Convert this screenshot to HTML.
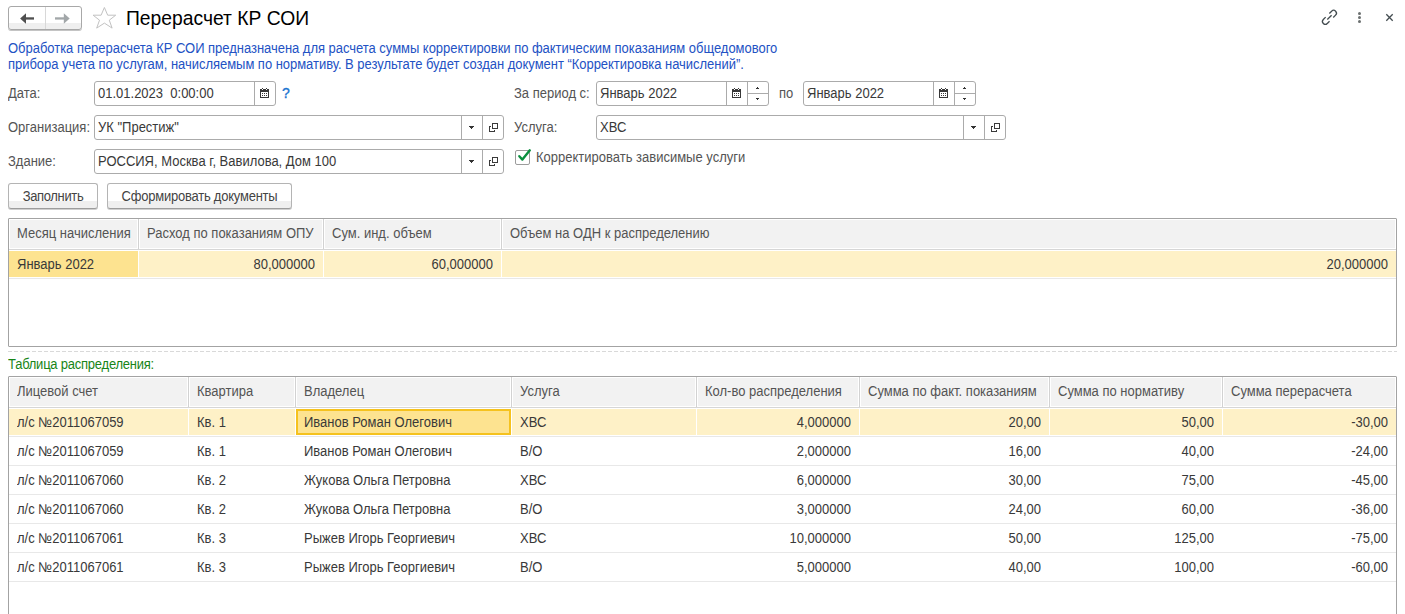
<!DOCTYPE html>
<html><head><meta charset="utf-8">
<style>
*{box-sizing:border-box}
html,body{margin:0;padding:0;background:#fff;width:1405px;height:614px;overflow:hidden;font-family:"Liberation Sans",sans-serif;font-size:13px;color:#4d4d4d}
.a{position:absolute;white-space:nowrap}
.lbl{color:#545454;font-size:13px;line-height:16px;transform:scaleY(1.1);transform-origin:0 12.5px}
.inp{position:absolute;border:1px solid #ababab;border-radius:3px;background:#fff;height:25px}
.inp .v{position:absolute;left:3px;top:4px;color:#393939;font-size:13px;line-height:16px;white-space:nowrap;transform:scaleY(1.1);transform-origin:0 12.5px}
.inp .sep{position:absolute;top:0;bottom:0;width:1px;background:#ababab}
.inp svg{position:absolute;top:0}
.btn{position:absolute;height:26px;border:1px solid #b4b4b4;border-bottom-color:#9c9c9c;border-radius:3px;background:linear-gradient(#fff 0,#fff 17px,#efefef 17px,#efefef 100%);box-shadow:0 1px 0 #cfcfcf;color:#444;font-size:13px;line-height:26px;text-align:center}
.tb{position:absolute;border:1px solid #a3a3a3;border-radius:1px;background:#fff}
.ht{line-height:30px;color:#545454;overflow:hidden;transform:scaleY(1.1);transform-origin:0 19.5px}
.ct{line-height:29px;color:#393939;transform:scaleY(1.1);transform-origin:0 19px}
.sy{display:inline-block;transform:scaleY(1.1);transform-origin:0 17.5px}
.dl{transform:scaleY(1.1);transform-origin:0 12.5px}
</style></head><body>

<!-- nav buttons -->
<div class="a" style="left:8px;top:6px;width:74px;height:24px;border:1px solid #a8a8a8;border-radius:3px;background:linear-gradient(#fff 0,#fff 16px,#efefef 16px,#efefef 100%);box-shadow:0 1px 0 #c4c4c4"></div>
<div class="a" style="left:45px;top:7px;width:1px;height:22px;background:#d8d8d8"></div>
<svg class="a" style="left:0;top:0" width="130" height="40">
  <path d="M20.1 18.45 L26 13.2 L26 23.7 Z" fill="#4f4f4f"/>
  <rect x="25" y="17.3" width="9" height="2.3" fill="#4f4f4f"/>
  <path d="M69.7 18.45 L63.8 13.2 L63.8 23.7 Z" fill="#a2a7a9"/>
  <rect x="55" y="17.3" width="9" height="2.3" fill="#a2a7a9"/>
  <path d="M104.4 7.5 L107.7 15.2 L115.7 15.2 L109.3 20.2 L112.1 28.1 L104.4 23.1 L96.7 28.1 L99.5 20.2 L93.1 15.2 L101.1 15.2 Z" fill="none" stroke="#c2c2c2" stroke-width="1" stroke-linejoin="miter"/>
</svg>
<div class="a" style="left:126px;top:6px;font-size:19.3px;line-height:26px;color:#000">Перерасчет КР СОИ</div>

<!-- top right icons -->
<svg class="a" style="left:1310px;top:0" width="95" height="40">
  <g fill="none" stroke="#434c50" stroke-width="1.3">
  <path d="M19.36 13.43 L21.62 11.17 A2.8 2.8 0 0 1 25.58 15.13 L23.25 17.46"/>
  <path d="M19.54 21.17 L17.28 23.43 A2.8 2.8 0 0 1 13.32 19.47 L15.65 17.14"/>
  <path d="M17.3 19.5 L21.6 15.2"/>
  </g>
  <circle cx="49.5" cy="13.5" r="1.5" fill="#6b7070"/>
  <circle cx="49.5" cy="17.5" r="1.5" fill="#6b7070"/>
  <circle cx="49.5" cy="21.4" r="1.5" fill="#6b7070"/>
  <path d="M76.3 14.3 L82.7 20.7 M82.7 14.3 L76.3 20.7" stroke="#434c50" stroke-width="1.3"/>
</svg>

<!-- description -->
<div class="a dl" style="left:8px;top:41px;font-size:13px;line-height:16px;color:#2352c4;letter-spacing:-0.03px">Обработка перерасчета КР СОИ предназначена для расчета суммы корректировки по фактическим показаниям общедомового</div>
<div class="a dl" style="left:8px;top:57px;font-size:13px;line-height:16px;color:#2352c4;letter-spacing:-0.03px">прибора учета по услугам, начисляемым по нормативу. В результате будет создан документ “Корректировка начислений”.</div>

<!-- row: Дата -->
<div class="a lbl" style="left:8px;top:86px">Дата:</div>
<div class="inp" style="left:94px;top:81px;width:182px">
  <div class="v">01.01.2023&nbsp; 0:00:00</div>
  <div class="sep" style="left:159px"></div>
  <svg style="left:165px;top:6px" width="9" height="10" shape-rendering="crispEdges"><g fill="#383838"><rect x="0" y="1" width="9" height="3"/><rect x="0" y="1" width="1" height="9"/><rect x="8" y="1" width="1" height="9"/><rect x="0" y="9" width="9" height="1"/><rect x="2" y="0" width="1" height="1"/><rect x="6" y="0" width="1" height="1"/><rect x="2" y="5" width="1" height="1"/><rect x="4" y="5" width="1" height="1"/><rect x="6" y="5" width="1" height="1"/><rect x="2" y="7" width="1" height="1"/><rect x="4" y="7" width="1" height="1"/><rect x="6" y="7" width="1" height="1"/></g><rect x="2" y="1" width="1" height="1" fill="#fff"/><rect x="6" y="1" width="1" height="1" fill="#fff"/></svg>
</div>
<div class="a" style="left:282px;top:85px;color:#1a74d0;font-size:14px;line-height:16px;-webkit-text-stroke:0.35px #1a74d0">?</div>

<div class="a lbl" style="left:514px;top:86px">За период с:</div>
<div class="inp" style="left:596px;top:81px;width:173px">
  <div class="v">Январь 2022</div>
  <div class="sep" style="left:129px"></div>
  <div class="sep" style="left:150px"></div>
  <div class="a" style="left:151px;top:11px;width:20px;height:1px;background:#ababab"></div>
  <svg style="left:135px;top:6px" width="9" height="10" shape-rendering="crispEdges"><g fill="#383838"><rect x="0" y="1" width="9" height="3"/><rect x="0" y="1" width="1" height="9"/><rect x="8" y="1" width="1" height="9"/><rect x="0" y="9" width="9" height="1"/><rect x="2" y="0" width="1" height="1"/><rect x="6" y="0" width="1" height="1"/><rect x="2" y="5" width="1" height="1"/><rect x="4" y="5" width="1" height="1"/><rect x="6" y="5" width="1" height="1"/><rect x="2" y="7" width="1" height="1"/><rect x="4" y="7" width="1" height="1"/><rect x="6" y="7" width="1" height="1"/></g><rect x="2" y="1" width="1" height="1" fill="#fff"/><rect x="6" y="1" width="1" height="1" fill="#fff"/></svg>
  <svg style="left:159px;top:5px" width="3" height="13" shape-rendering="crispEdges"><g fill="#333"><rect x="1" y="0" width="1" height="1"/><rect x="0" y="1" width="3" height="1"/><rect x="0" y="11" width="3" height="1"/><rect x="1" y="12" width="1" height="1"/></g></svg>
</div>
<div class="a lbl" style="left:779px;top:86px">по</div>
<div class="inp" style="left:803px;top:81px;width:173px">
  <div class="v">Январь 2022</div>
  <div class="sep" style="left:129px"></div>
  <div class="sep" style="left:150px"></div>
  <div class="a" style="left:151px;top:11px;width:20px;height:1px;background:#ababab"></div>
  <svg style="left:135px;top:6px" width="9" height="10" shape-rendering="crispEdges"><g fill="#383838"><rect x="0" y="1" width="9" height="3"/><rect x="0" y="1" width="1" height="9"/><rect x="8" y="1" width="1" height="9"/><rect x="0" y="9" width="9" height="1"/><rect x="2" y="0" width="1" height="1"/><rect x="6" y="0" width="1" height="1"/><rect x="2" y="5" width="1" height="1"/><rect x="4" y="5" width="1" height="1"/><rect x="6" y="5" width="1" height="1"/><rect x="2" y="7" width="1" height="1"/><rect x="4" y="7" width="1" height="1"/><rect x="6" y="7" width="1" height="1"/></g><rect x="2" y="1" width="1" height="1" fill="#fff"/><rect x="6" y="1" width="1" height="1" fill="#fff"/></svg>
  <svg style="left:159px;top:5px" width="3" height="13" shape-rendering="crispEdges"><g fill="#333"><rect x="1" y="0" width="1" height="1"/><rect x="0" y="1" width="3" height="1"/><rect x="0" y="11" width="3" height="1"/><rect x="1" y="12" width="1" height="1"/></g></svg>
</div>

<!-- row: Организация -->
<div class="a lbl" style="left:8px;top:120px">Организация:</div>
<div class="inp" style="left:94px;top:115px;width:410px">
  <div class="v">УК "Престиж"</div>
  <div class="sep" style="left:366px"></div>
  <div class="sep" style="left:387px"></div>
  <svg style="left:367px;top:0" width="42" height="23" shape-rendering="crispEdges"><g fill="#333"><rect x="7" y="10" width="5" height="1"/><rect x="8" y="11" width="3" height="1"/><rect x="9" y="12" width="1" height="1"/></g><g fill="#3a3a3a"><rect x="30" y="7" width="6" height="1"/><rect x="30" y="12" width="6" height="1"/><rect x="30" y="7" width="1" height="6"/><rect x="35" y="7" width="1" height="6"/><rect x="27" y="10" width="1" height="6"/><rect x="28" y="10" width="1" height="1"/><rect x="27" y="15" width="6" height="1"/><rect x="32" y="14" width="1" height="1"/></g></svg>
</div>
<div class="a lbl" style="left:514px;top:120px">Услуга:</div>
<div class="inp" style="left:596px;top:115px;width:410px">
  <div class="v">ХВС</div>
  <div class="sep" style="left:366px"></div>
  <div class="sep" style="left:387px"></div>
  <svg style="left:367px;top:0" width="42" height="23" shape-rendering="crispEdges"><g fill="#333"><rect x="7" y="10" width="5" height="1"/><rect x="8" y="11" width="3" height="1"/><rect x="9" y="12" width="1" height="1"/></g><g fill="#3a3a3a"><rect x="30" y="7" width="6" height="1"/><rect x="30" y="12" width="6" height="1"/><rect x="30" y="7" width="1" height="6"/><rect x="35" y="7" width="1" height="6"/><rect x="27" y="10" width="1" height="6"/><rect x="28" y="10" width="1" height="1"/><rect x="27" y="15" width="6" height="1"/><rect x="32" y="14" width="1" height="1"/></g></svg>
</div>

<!-- row: Здание -->
<div class="a lbl" style="left:8px;top:154px">Здание:</div>
<div class="inp" style="left:94px;top:149px;width:410px">
  <div class="v">РОССИЯ, Москва г, Вавилова, Дом 100</div>
  <div class="sep" style="left:366px"></div>
  <div class="sep" style="left:387px"></div>
  <svg style="left:367px;top:0" width="42" height="23" shape-rendering="crispEdges"><g fill="#333"><rect x="7" y="10" width="5" height="1"/><rect x="8" y="11" width="3" height="1"/><rect x="9" y="12" width="1" height="1"/></g><g fill="#3a3a3a"><rect x="30" y="7" width="6" height="1"/><rect x="30" y="12" width="6" height="1"/><rect x="30" y="7" width="1" height="6"/><rect x="35" y="7" width="1" height="6"/><rect x="27" y="10" width="1" height="6"/><rect x="28" y="10" width="1" height="1"/><rect x="27" y="15" width="6" height="1"/><rect x="32" y="14" width="1" height="1"/></g></svg>
</div>
<div class="a" style="left:515px;top:150px;width:15px;height:15px;border:1px solid #9c9c9c;border-radius:2px;background:#fff"></div>
<svg class="a" style="left:510px;top:144px" width="25" height="22"><path d="M9.3 12.2 L12.4 15.6 L19.8 6.3" fill="none" stroke="#0a8f3e" stroke-width="2.35" stroke-linecap="round" stroke-linejoin="round"/></svg>
<div class="a lbl" style="left:536px;top:150px">Корректировать зависимые услуги</div>

<!-- buttons -->
<div class="btn" style="left:8px;top:183px;width:90px;"><span class="sy" style="letter-spacing:-0.35px">Заполнить</span></div>
<div class="btn" style="left:107px;top:183px;width:185px;"><span class="sy" style="letter-spacing:-0.23px">Сформировать документы</span></div>

<!-- table1 -->
<div class="tb" style="left:8px;top:218px;width:1389px;height:129px"></div>
<div class="a" style="left:9px;top:219px;width:1387px;height:30px;background:#f2f2f2;box-shadow:inset 0 0 0 1px #fff"></div>
<div class="a" style="left:9px;top:249px;width:1387px;height:1px;background:#d6d6d6"></div>
<div class="a" style="left:137px;top:219px;width:3px;height:30px;background:#fff"></div>
<div class="a" style="left:138px;top:219px;width:1px;height:30px;background:#d2d2d2"></div>
<div class="a" style="left:322px;top:219px;width:3px;height:30px;background:#fff"></div>
<div class="a" style="left:323px;top:219px;width:1px;height:30px;background:#d2d2d2"></div>
<div class="a" style="left:500px;top:219px;width:3px;height:30px;background:#fff"></div>
<div class="a" style="left:501px;top:219px;width:1px;height:30px;background:#d2d2d2"></div>
<div class="a ht" style="left:17px;top:219px;width:118px">Месяц начисления</div>
<div class="a ht" style="left:147px;top:219px;width:173px">Расход по показаниям ОПУ</div>
<div class="a ht" style="left:332px;top:219px;width:166px">Сум. инд. объем</div>
<div class="a ht" style="left:510px;top:219px;width:883px">Объем на ОДН к распределению</div>
<div class="a" style="left:9px;top:251px;width:1387px;height:26px;background:#fef1c7"></div>
<div class="a" style="left:138px;top:251px;width:1px;height:26px;background:#fff"></div>
<div class="a" style="left:323px;top:251px;width:1px;height:26px;background:#fff"></div>
<div class="a" style="left:501px;top:251px;width:1px;height:26px;background:#fff"></div>
<div class="a" style="left:9px;top:251px;width:129px;height:26px;background:#fde390"></div>
<div class="a" style="left:9px;top:278px;width:1387px;height:1px;background:#e8e8e8"></div>
<div class="a ct" style="left:17px;top:250px">Январь 2022</div>
<div class="a ct" style="left:138px;top:250;width:177px;text-align:right;top:250px">80,000000</div>
<div class="a ct" style="left:323px;top:250;width:170px;text-align:right;top:250px">60,000000</div>
<div class="a ct" style="left:501px;top:250;width:887px;text-align:right;top:250px">20,000000</div>
<!-- separator -->
<div class="a" style="left:8px;top:351px;width:1389px;height:1px;background:repeating-linear-gradient(90deg,#d9d9d9 0,#d9d9d9 4px,transparent 4px,transparent 6px)"></div>
<div class="a" style="left:8px;top:357px;font-size:13px;line-height:16px;color:#178517;letter-spacing:-0.23px;transform:scaleY(1.1);transform-origin:0 12.5px">Таблица распределения:</div>

<!-- table2 -->
<div class="tb" style="left:8px;top:376px;width:1389px;height:260px"></div>
<div class="a" style="left:9px;top:377px;width:1387px;height:30px;background:#f2f2f2;box-shadow:inset 0 0 0 1px #fff"></div>
<div class="a" style="left:9px;top:407px;width:1387px;height:1px;background:#d6d6d6"></div>
<div class="a" style="left:187px;top:377px;width:3px;height:30px;background:#fff"></div>
<div class="a" style="left:188px;top:377px;width:1px;height:30px;background:#d2d2d2"></div>
<div class="a" style="left:294px;top:377px;width:3px;height:30px;background:#fff"></div>
<div class="a" style="left:295px;top:377px;width:1px;height:30px;background:#d2d2d2"></div>
<div class="a" style="left:510px;top:377px;width:3px;height:30px;background:#fff"></div>
<div class="a" style="left:511px;top:377px;width:1px;height:30px;background:#d2d2d2"></div>
<div class="a" style="left:695px;top:377px;width:3px;height:30px;background:#fff"></div>
<div class="a" style="left:696px;top:377px;width:1px;height:30px;background:#d2d2d2"></div>
<div class="a" style="left:858px;top:377px;width:3px;height:30px;background:#fff"></div>
<div class="a" style="left:859px;top:377px;width:1px;height:30px;background:#d2d2d2"></div>
<div class="a" style="left:1048px;top:377px;width:3px;height:30px;background:#fff"></div>
<div class="a" style="left:1049px;top:377px;width:1px;height:30px;background:#d2d2d2"></div>
<div class="a" style="left:1221px;top:377px;width:3px;height:30px;background:#fff"></div>
<div class="a" style="left:1222px;top:377px;width:1px;height:30px;background:#d2d2d2"></div>
<div class="a ht" style="left:17px;top:377px;width:168px">Лицевой счет</div>
<div class="a ht" style="left:197px;top:377px;width:95px">Квартира</div>
<div class="a ht" style="left:304px;top:377px;width:204px">Владелец</div>
<div class="a ht" style="left:520px;top:377px;width:173px">Услуга</div>
<div class="a ht" style="left:705px;top:377px;width:151px">Кол-во распределения</div>
<div class="a ht" style="left:868px;top:377px;width:178px">Сумма по факт. показаниям</div>
<div class="a ht" style="left:1058px;top:377px;width:161px">Сумма по нормативу</div>
<div class="a ht" style="left:1231px;top:377px;width:162px">Сумма перерасчета</div>
<div class="a" style="left:9px;top:409px;width:1387px;height:26px;background:#fef1c7"></div>
<div class="a" style="left:188px;top:409px;width:1px;height:26px;background:#fff"></div>
<div class="a" style="left:295px;top:409px;width:1px;height:26px;background:#fff"></div>
<div class="a" style="left:511px;top:409px;width:1px;height:26px;background:#fff"></div>
<div class="a" style="left:696px;top:409px;width:1px;height:26px;background:#fff"></div>
<div class="a" style="left:859px;top:409px;width:1px;height:26px;background:#fff"></div>
<div class="a" style="left:1049px;top:409px;width:1px;height:26px;background:#fff"></div>
<div class="a" style="left:1222px;top:409px;width:1px;height:26px;background:#fff"></div>
<div class="a" style="left:296px;top:409px;width:215px;height:26px;background:#fde390;border:2px solid #f5c21e;box-sizing:border-box"></div>
<div class="a" style="left:9px;top:436px;width:1387px;height:1px;background:#e8e8e8"></div>
<div class="a ct" style="left:17px;top:408px">л/с №2011067059</div>
<div class="a ct" style="left:197px;top:408px">Кв. 1</div>
<div class="a ct" style="left:304px;top:408px">Иванов Роман Олегович</div>
<div class="a ct" style="left:520px;top:408px">ХВС</div>
<div class="a ct" style="left:696px;top:408;width:155px;text-align:right;top:408px">4,000000</div>
<div class="a ct" style="left:859px;top:408;width:182px;text-align:right;top:408px">20,00</div>
<div class="a ct" style="left:1049px;top:408;width:165px;text-align:right;top:408px">50,00</div>
<div class="a ct" style="left:1222px;top:408;width:166px;text-align:right;top:408px">-30,00</div>
<div class="a" style="left:9px;top:465px;width:1387px;height:1px;background:#e8e8e8"></div>
<div class="a ct" style="left:17px;top:437px">л/с №2011067059</div>
<div class="a ct" style="left:197px;top:437px">Кв. 1</div>
<div class="a ct" style="left:304px;top:437px">Иванов Роман Олегович</div>
<div class="a ct" style="left:520px;top:437px">В/О</div>
<div class="a ct" style="left:696px;top:437;width:155px;text-align:right;top:437px">2,000000</div>
<div class="a ct" style="left:859px;top:437;width:182px;text-align:right;top:437px">16,00</div>
<div class="a ct" style="left:1049px;top:437;width:165px;text-align:right;top:437px">40,00</div>
<div class="a ct" style="left:1222px;top:437;width:166px;text-align:right;top:437px">-24,00</div>
<div class="a" style="left:9px;top:494px;width:1387px;height:1px;background:#e8e8e8"></div>
<div class="a ct" style="left:17px;top:466px">л/с №2011067060</div>
<div class="a ct" style="left:197px;top:466px">Кв. 2</div>
<div class="a ct" style="left:304px;top:466px">Жукова Ольга Петровна</div>
<div class="a ct" style="left:520px;top:466px">ХВС</div>
<div class="a ct" style="left:696px;top:466;width:155px;text-align:right;top:466px">6,000000</div>
<div class="a ct" style="left:859px;top:466;width:182px;text-align:right;top:466px">30,00</div>
<div class="a ct" style="left:1049px;top:466;width:165px;text-align:right;top:466px">75,00</div>
<div class="a ct" style="left:1222px;top:466;width:166px;text-align:right;top:466px">-45,00</div>
<div class="a" style="left:9px;top:523px;width:1387px;height:1px;background:#e8e8e8"></div>
<div class="a ct" style="left:17px;top:495px">л/с №2011067060</div>
<div class="a ct" style="left:197px;top:495px">Кв. 2</div>
<div class="a ct" style="left:304px;top:495px">Жукова Ольга Петровна</div>
<div class="a ct" style="left:520px;top:495px">В/О</div>
<div class="a ct" style="left:696px;top:495;width:155px;text-align:right;top:495px">3,000000</div>
<div class="a ct" style="left:859px;top:495;width:182px;text-align:right;top:495px">24,00</div>
<div class="a ct" style="left:1049px;top:495;width:165px;text-align:right;top:495px">60,00</div>
<div class="a ct" style="left:1222px;top:495;width:166px;text-align:right;top:495px">-36,00</div>
<div class="a" style="left:9px;top:552px;width:1387px;height:1px;background:#e8e8e8"></div>
<div class="a ct" style="left:17px;top:524px">л/с №2011067061</div>
<div class="a ct" style="left:197px;top:524px">Кв. 3</div>
<div class="a ct" style="left:304px;top:524px">Рыжев Игорь Георгиевич</div>
<div class="a ct" style="left:520px;top:524px">ХВС</div>
<div class="a ct" style="left:696px;top:524;width:155px;text-align:right;top:524px">10,000000</div>
<div class="a ct" style="left:859px;top:524;width:182px;text-align:right;top:524px">50,00</div>
<div class="a ct" style="left:1049px;top:524;width:165px;text-align:right;top:524px">125,00</div>
<div class="a ct" style="left:1222px;top:524;width:166px;text-align:right;top:524px">-75,00</div>
<div class="a" style="left:9px;top:581px;width:1387px;height:1px;background:#e8e8e8"></div>
<div class="a ct" style="left:17px;top:553px">л/с №2011067061</div>
<div class="a ct" style="left:197px;top:553px">Кв. 3</div>
<div class="a ct" style="left:304px;top:553px">Рыжев Игорь Георгиевич</div>
<div class="a ct" style="left:520px;top:553px">В/О</div>
<div class="a ct" style="left:696px;top:553;width:155px;text-align:right;top:553px">5,000000</div>
<div class="a ct" style="left:859px;top:553;width:182px;text-align:right;top:553px">40,00</div>
<div class="a ct" style="left:1049px;top:553;width:165px;text-align:right;top:553px">100,00</div>
<div class="a ct" style="left:1222px;top:553;width:166px;text-align:right;top:553px">-60,00</div>
</body></html>
